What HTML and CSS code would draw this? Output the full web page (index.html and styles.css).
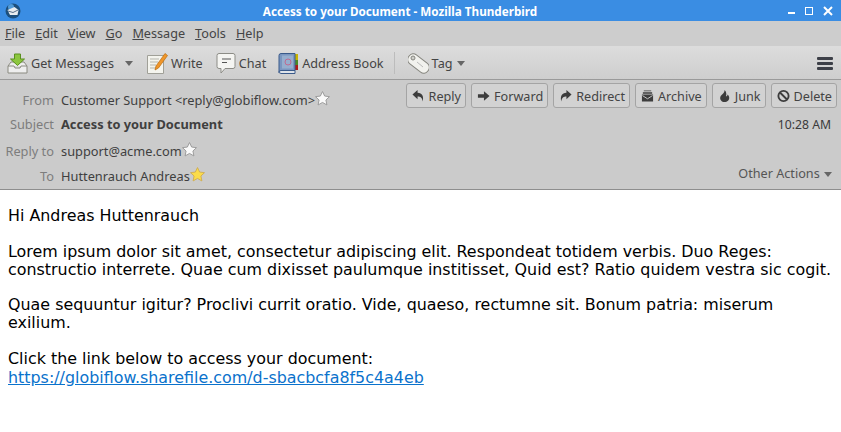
FILE: index.html
```html
<!DOCTYPE html>
<html lang="en">
<head>
    <meta charset="UTF-8">
    <title>Access to your Document - Mozilla Thunderbird</title>
    <link rel="stylesheet" href="styles.css">
</head>
<body>
<div class="titlebar">
    <svg class="app-icon" width="16" height="16" viewBox="0 0 16 16"><circle cx="8" cy="8" r="7.5" fill="#1c4f7c"/><circle cx="6" cy="4" r="3" fill="#4f9ad8"/><path d="M2.500 7l7-3 4 3-1 5H5z" fill="#e8edf0"/><path d="M3 8l5 1.500 5-2.500" stroke="#58708a" fill="none"/></svg>
    <span class="title-text">Access to your Document - Mozilla Thunderbird</span>
    <div class="win-btns">
        <span class="win-min"></span>
        <span class="win-max"></span>
        <svg width="10" height="10" viewBox="0 0 10 10"><path d="M1 1l8 8M9 1l-8 8" stroke="#fff" stroke-width="2"/></svg>
    </div>
</div>

<div class="menubar">
    <span><u>F</u>ile</span>
    <span><u>E</u>dit</span>
    <span><u>V</u>iew</span>
    <span><u>G</u>o</span>
    <span><u>M</u>essage</span>
    <span><u>T</u>ools</span>
    <span><u>H</u>elp</span>
</div>

<div class="toolbar">
    <div class="tool get-messages">
        <svg width="21" height="21" viewBox="0 0 21 21"><path d="M1 13l3-4h13l3 4v7H1z" fill="#eee" stroke="#8a8a80"/><path d="M1 13h6l1 2h5l1-2h6" fill="#ddd" stroke="#8a8a80"/><path d="M7.500 1h6v5h4l-7 6.500L3.500 6h4z" fill="#8cc63f" stroke="#5a8f1e"/></svg>
        <span>Get Messages</span>
        <span class="arrow get-arrow"></span>
    </div>
    <div class="tool write">
        <svg width="21" height="21" viewBox="0 0 21 21"><path d="M.5 2.500h16v18H.5z" fill="#f4f4ee" stroke="#a0a098"/><path d="M3 6h9M3 9h8M3 12h6M3 15h6" stroke="#b5b5ac"/><path d="M18 .5l2.500 2-9 12.500-3.500 2 1-4z" fill="#f0962a" stroke="#b86c10" stroke-width=".7"/></svg>
        <span>Write</span>
    </div>
    <div class="tool chat">
        <svg width="20" height="21" viewBox="0 0 20 21"><path d="M3 .5h14a2 2 0 0 1 2 2v11a2 2 0 0 1-2 2H9l-4 4.500v-4.500H3a2 2 0 0 1-2-2v-11a2 2 0 0 1 2-2z" fill="#f5f5f2" stroke="#8c8c86"/><path d="M6 6h9M6 9.500h5" stroke="#555" stroke-width="1.200"/></svg>
        <span>Chat</span>
    </div>
    <div class="tool address">
        <svg width="20" height="21" viewBox="0 0 20 21"><rect x="17" y="1" width="3" height="6" fill="#c8b400"/><rect x="17" y="7" width="3" height="5" fill="#4c8a22"/><rect x="17" y="12" width="3" height="5" fill="#b01818"/><path d="M1 2.500a2 2 0 0 1 2-2h14v17H3a2 2 0 0 0-2 2z" fill="#7a96c0" stroke="#3a5a8a"/><path d="M1 19.500a2 2 0 0 1 2-2h14v3H3z" fill="#dfe4ea" stroke="#3a5a8a"/><rect x="4" y="2.500" width="11" height="13" fill="#96aece"/><circle cx="10" cy="9" r="3" fill="none" stroke="#c06a90"/></svg>
        <span>Address Book</span>
    </div>
    <div class="sep"></div>
    <div class="tool tag">
        <svg width="21" height="21" viewBox="0 0 21 21"><rect x="-1.500" y="5" width="24" height="11" rx="5" transform="rotate(38 10.500 10.500)" fill="#f2f2ee" stroke="#85857e"/><circle cx="5" cy="5" r="2" fill="#cfcfca" stroke="#85857e"/><path d="M9 9l6 5" stroke="#bbb"/></svg>
        <span>Tag</span>
        <span class="arrow"></span>
    </div>
    <div class="menu-btn"><span></span><span></span><span></span></div>
</div>

<div class="header">
    <div class="header-rows">
        <div class="hdr-row">
            <span class="hdr-label">From</span>
            <span>Customer Support &lt;reply@globiflow.com&gt;</span>
            <svg class="star" width="15" height="15" viewBox="0 0 14 14"><path d="M7 .5l2 4.200 4.500.6-3.300 3.100.9 4.600L7 10.700l-4.100 2.300.9-4.600L.5 5.300 5 4.700z" fill="#fafafa" stroke="#999" stroke-width=".9"/></svg>
        </div>
        <div class="hdr-row">
            <span class="hdr-label">Subject</span>
            <strong>Access to your Document</strong>
        </div>
        <div class="hdr-row replyto-row">
            <span class="hdr-label">Reply to</span>
            <span>support@acme.com</span>
            <svg class="star" width="15" height="15" viewBox="0 0 14 14"><path d="M7 .5l2 4.200 4.500.6-3.300 3.100.9 4.600L7 10.700l-4.100 2.300.9-4.600L.5 5.300 5 4.700z" fill="#fafafa" stroke="#999" stroke-width=".9"/></svg>
        </div>
        <div class="hdr-row to-row">
            <span class="hdr-label">To</span>
            <span>Huttenrauch Andreas</span>
            <svg class="star" width="15" height="15" viewBox="0 0 14 14"><path d="M7 .5l2 4.200 4.500.6-3.300 3.100.9 4.600L7 10.700l-4.100 2.300.9-4.600L.5 5.300 5 4.700z" fill="#fbdc4a" stroke="#cfae55" stroke-width=".9"/></svg>
        </div>
    </div>
    <div class="header-side">
        <div class="actions">
            <div class="btn"><svg width="13" height="14" viewBox="0 0 14 14"><path d="M6 .5L.5 5.500 6 10.500V7.500c3 0 5 1 5.500 5.500 1.500-5.500-.5-9.500-5.500-9.500z" fill="#3d3d3d"/></svg>Reply</div>
            <div class="btn"><svg width="13" height="14" viewBox="0 0 14 14"><path d="M1 5h6.500V2l6 5-6 5V9H1z" fill="#3d3d3d"/></svg>Forward</div>
            <div class="btn"><svg width="13" height="14" viewBox="0 0 14 14"><path d="M8 .5l5.500 5L8 10.500V7.500c-3 0-5 1-5.500 5.500C1 7.500 3 3.500 8 3.500z" fill="#3d3d3d"/></svg>Redirect</div>
            <div class="btn"><svg width="13" height="14" viewBox="0 0 14 14"><path d="M3 1h8v1H3zM2 3h10v1.500H2zM1 5.500h12V13H1z" fill="#3d3d3d"/><path d="M1.500 6.500L7 10l5.500-3.500" stroke="#ccc" fill="none"/></svg>Archive</div>
            <div class="btn"><svg width="13" height="14" viewBox="0 0 14 14"><path d="M7 .5C7.500 4 3.500 5 2.500 8c-.8 3 1.500 5.500 4.500 5.500s5.500-2 5-5.500c-.3-1-1-2-1.700-2.500 0 1-.8 2-1.800 2C9.500 5 9 2 7 .5z" fill="#3d3d3d"/></svg>Junk</div>
            <div class="btn"><svg width="13" height="14" viewBox="0 0 14 14"><circle cx="7" cy="7" r="5.500" fill="none" stroke="#3d3d3d" stroke-width="2"/><path d="M3.500 3.500l7 7" stroke="#3d3d3d" stroke-width="2"/></svg>Delete</div>
        </div>
        <div class="time">10:28 AM</div>
        <div class="other-actions">Other Actions <span class="arrow"></span></div>
    </div>
</div>

<div class="message">
    <p>Hi Andreas Huttenrauch</p>
    <p class="lorem">Lorem ipsum dolor sit amet, consectetur adipiscing elit. Respondeat totidem verbis. Duo Reges: constructio interrete. Quae cum dixisset paulumque institisset, Quid est? Ratio quidem vestra sic cogit.</p>
    <p class="quae">Quae sequuntur igitur? Proclivi currit oratio. Vide, quaeso, rectumne sit. Bonum patria: miserum exilium.</p>
    <p class="click">Click the link below to access your document:<br><a href="#">https://globiflow.sharefile.com/d-sbacbcfa8f5c4a4eb</a></p>
</div>
</body>
</html>
```

FILE: styles.css
```css
html, body {
    margin: 0;
    padding: 0;
    background: #fff;
}

body {
    width: 841px;
    height: 432px;
    overflow: hidden;
    font-family: "Noto Sans", "Open Sans", sans-serif;
    font-size: 12.65px;
    color: #3a3a3a;
}

/* window title */
.titlebar {
    height: 21px;
    display: flex;
    align-items: center;
    background: #3a8de3;
    color: #fff;
}

.app-icon {
    margin-left: 5px;
}

.title-text {
    flex: 1;
    padding-right: 9px;
    text-align: center;
    font-size: 11.7px;
    font-weight: 700;
    line-height: 18px;
}

.win-btns {
    margin-right: 8px;
    display: flex;
    align-items: center;
    gap: 10px;
}

.win-min {
    width: 7px;
    height: 2px;
    margin-top: 5px;
    background: #fff;
}

.win-max {
    width: 6px;
    height: 6px;
    border: 1.500px solid #fff;
}

/* menu */
.menubar {
    height: 25px;
    display: flex;
    align-items: center;
    gap: 10px;
    padding-left: 5px;
    background: #cdcdcd;
    color: #444;
    line-height: 25px;
}

/* toolbar */
.toolbar {
    height: 32px;
    display: flex;
    align-items: center;
    border-top: 1px solid #dcdcdc;
    border-bottom: 1px solid #9a9a9a;
    background: linear-gradient(#dcdcdc, #cecece);
    color: #444;
}

.tool {
    display: flex;
    align-items: center;
    gap: 3px;
}

.get-messages {
    margin-left: 7px;
}

.write {
    margin-left: 14px;
}

.chat {
    margin-left: 13px;
}

.address {
    margin-left: 12px;
    gap: 4px;
}

.sep {
    width: 1px;
    height: 22px;
    margin-left: 10px;
    background: #bcbcbc;
}

.tag {
    margin-left: 13px;
}

.tag .arrow {
    margin-left: 1px;
}

.arrow {
    display: inline-block;
    width: 0;
    height: 0;
    border-left: 4px solid transparent;
    border-right: 4px solid transparent;
    border-top: 5px solid #666;
}

.get-arrow {
    margin-left: 8px;
}

.menu-btn {
    margin-left: auto;
    margin-right: 8px;
    display: flex;
    flex-direction: column;
    gap: 2px;
}

.menu-btn span {
    display: block;
    width: 16px;
    height: 3px;
    border-radius: 1px;
    background: #3d4048;
}

/* message header */
.header {
    height: 109px;
    display: flex;
    justify-content: space-between;
    border-bottom: 1px solid #8e8e8e;
    background: #cbcbcb;
}

.header-rows {
    padding-top: 8px;
    font-size: 12.8px;
}

.hdr-row {
    display: flex;
    align-items: center;
    height: 24px;
    color: #3f3f3f;
}

.replyto-row {
    margin-top: 3px;
}

.to-row {
    margin-top: 1px;
}

.hdr-label {
    width: 54px;
    margin-right: 7px;
    text-align: right;
    color: #7d7d7d;
}

.star {
    margin-top: -3px;
}

.header-side {
    display: flex;
    flex-direction: column;
    align-items: flex-end;
    padding-right: 4px;
}

.actions {
    display: flex;
    gap: 5px;
    padding-top: 3px;
}

.btn {
    height: 23px;
    display: flex;
    align-items: center;
    gap: 4px;
    padding: 0 4px 0 5px;
    border: 1px solid #a4a4a4;
    border-radius: 3px;
    background: #d2d2d2;
    color: #444;
}

.time {
    margin-top: 8px;
    padding-right: 6px;
    font-size: 12.2px;
    line-height: 18px;
}

.other-actions {
    margin-top: 30px;
    padding-right: 5px;
    line-height: 18px;
    color: #555;
}

.other-actions .arrow {
    margin-left: 1px;
    vertical-align: 1px;
}

/* body of the mail */
.message {
    padding: 17px 8px 8px;
    font-family: "DejaVu Sans", sans-serif;
    font-size: 15.9px;
    line-height: 18px;
    color: #000;
}

.message p {
    margin: 0 0 18px;
}

.message .lorem {
    margin-bottom: 17px;
}

.message .quae {
    margin-bottom: 16.5px;
}

.message .click {
    line-height: 19px;
}

.message a {
    color: #0a72cc;
}
```
